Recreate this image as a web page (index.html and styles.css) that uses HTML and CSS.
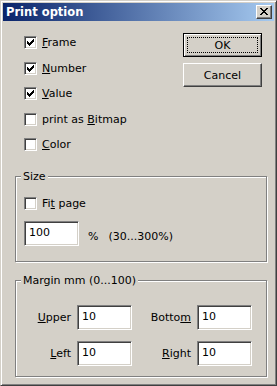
FILE: index.html
```html
<!DOCTYPE html>
<html lang="en">
<head>
  <meta charset="UTF-8">
  <title>Print option</title>
  <link rel="stylesheet" href="styles.css">
</head>
<body>
  <div class="window">
    <div class="titlebar">
      <span class="title">Print option</span>
      <span class="close">
        <svg width="8" height="7" viewBox="0 0 8 7"><path d="M0 0h2v1h-2z M6 0h2v1h-2z M1 1h2v1h-2z M5 1h2v1h-2z M2 2h4v1h-4z M3 3h2v1h-2z M2 4h4v1h-4z M1 5h2v1h-2z M5 5h2v1h-2z M0 6h2v1h-2z M6 6h2v1h-2z" fill="#000"/></svg>
      </span>
    </div>

    <div class="client">
      <div class="top">
        <div class="checks">
          <div class="check"><span class="box"><svg class="tick" viewBox="0 0 11 11"><path d="M2 4h1v3h-1z M3 5h1v3h-1z M4 6h1v3h-1z M5 5h1v3h-1z M6 4h1v3h-1z M7 3h1v3h-1z M8 2h1v3h-1z"/></svg></span><span><u>F</u>rame</span></div>
          <div class="check"><span class="box"><svg class="tick" viewBox="0 0 11 11"><path d="M2 4h1v3h-1z M3 5h1v3h-1z M4 6h1v3h-1z M5 5h1v3h-1z M6 4h1v3h-1z M7 3h1v3h-1z M8 2h1v3h-1z"/></svg></span><span><u>N</u>umber</span></div>
          <div class="check"><span class="box"><svg class="tick" viewBox="0 0 11 11"><path d="M2 4h1v3h-1z M3 5h1v3h-1z M4 6h1v3h-1z M5 5h1v3h-1z M6 4h1v3h-1z M7 3h1v3h-1z M8 2h1v3h-1z"/></svg></span><span><u>V</u>alue</span></div>
          <div class="check"><span class="box"></span><span>print as <u>B</u>itmap</span></div>
          <div class="check"><span class="box"></span><span><u>C</u>olor</span></div>
        </div>
        <div class="buttons">
          <button class="btn default"><span class="focus">OK</span></button>
          <button class="btn">Cancel</button>
        </div>
      </div>

      <div class="group size">
        <span class="legend">Size</span>
        <div class="check"><span class="box"></span><span>Fi<u>t</u> page</span></div>
        <div class="size-row">
          <span class="edit">100</span>
          <span class="unit">%</span>
          <span class="range">(30...300%)</span>
        </div>
      </div>

      <div class="group margin">
        <span class="legend">Margin mm (0...100)</span>
        <div class="margin-grid">
          <span class="lbl"><u>U</u>pper</span>
          <span class="edit">10</span>
          <span class="lbl">Botto<u>m</u></span>
          <span class="edit">10</span>
          <span class="lbl"><u>L</u>eft</span>
          <span class="edit">10</span>
          <span class="lbl"><u>R</u>ight</span>
          <span class="edit">10</span>
        </div>
      </div>
    </div>
  </div>
</body>
</html>
```

FILE: styles.css
```css
* {
  box-sizing: border-box;
  margin: 0;
  padding: 0;
}
html {
  background-color: #d4d0c8;
}
body {
  font-family: "DejaVu Sans", sans-serif;
  font-size: 11px;
  line-height: 13px;
  color: #000;
}
u {
  text-decoration-thickness: 1px;
  text-underline-offset: 1px;
}

/* window frame */
.window {
  width: 277px;
  height: 386px;
  background-color: #d4d0c8;
  border: 1px solid;
  border-color: #d4d0c8 #404040 #404040 #d4d0c8;
  box-shadow: inset 1px 1px #fff, inset -1px -1px #808080;
  padding: 2px;
  display: flex;
  flex-direction: column;
}
.titlebar {
  height: 18px;
  flex-shrink: 0;
  background: linear-gradient(to right, #0a246a, #a6caf0);
  display: flex;
  align-items: center;
  justify-content: space-between;
  padding: 0 2px 0 3px;
}
.title {
  color: #fff;
  font-weight: bold;
  font-size: 11.5px;
}
.close {
  width: 16px;
  height: 14px;
  background-color: #d4d0c8;
  border: 1px solid;
  border-color: #fff #404040 #404040 #fff;
  box-shadow: inset -1px -1px #808080;
  padding: 2px 0 0 3px;
}
.close svg {
  display: block;
}

/* dialog body */
.client {
  flex: 1;
  padding: 12px 6px 0 12px;
}
.top {
  display: flex;
  justify-content: space-between;
  align-items: flex-start;
}
.checks {
  display: flex;
  flex-direction: column;
  gap: 12.5px;
  margin: 3px 0 0 9px;
}
.check {
  display: flex;
  align-items: center;
  gap: 5px;
  height: 13px;
}
.box {
  flex-shrink: 0;
  width: 13px;
  height: 13px;
  background-color: #fff;
  border: 1px solid;
  border-color: #808080 #fff #fff #808080;
  box-shadow: inset 1px 1px #404040, inset -1px -1px #d4d0c8;
}
.tick {
  display: block;
  width: 11px;
  height: 11px;
  fill: #000;
}

.buttons {
  display: flex;
  flex-direction: column;
  gap: 6px;
  margin-right: 6px;
}
.btn {
  width: 79px;
  height: 24px;
  font: inherit;
  color: #000;
  background-color: #d4d0c8;
  border: 1px solid;
  border-color: #fff #404040 #404040 #fff;
  box-shadow: inset -1px -1px #808080;
}
.btn.default {
  border-color: #000;
  box-shadow: inset 1px 1px #fff, inset -1px -1px #808080;
  padding: 3px;
}
.focus {
  display: flex;
  height: 100%;
  align-items: center;
  justify-content: center;
  border: 1px dotted #000;
}

/* group boxes */
.group {
  position: relative;
  width: 252px;
  flex-shrink: 0;
  border: 1px solid #808080;
  box-shadow: inset 1px 1px #fff, 1px 1px #fff;
}
.legend {
  position: absolute;
  top: -7px;
  left: 5px;
  padding: 0 2px;
  background-color: #d4d0c8;
}
.size {
  height: 86px;
  margin-top: 25px;
  padding: 20px 0 0 8px;
}
.size-row {
  display: flex;
  align-items: flex-end;
  margin-top: 11px;
}
.edit {
  width: 55px;
  height: 25px;
  background-color: #fff;
  border: 1px solid;
  border-color: #808080 #fff #fff #808080;
  box-shadow: inset 1px 1px #404040, inset -1px -1px #d4d0c8;
  padding: 4px 0 0 4px;
}
.unit {
  margin: 0 0 3px 9px;
}
.range {
  margin: 0 0 3px 10px;
}
.margin {
  height: 97px;
  margin-top: 18px;
  padding-top: 24px;
}
.margin-grid {
  display: grid;
  grid-template-columns: 55px 55px 53px 55px;
  column-gap: 6px;
  row-gap: 11px;
  align-items: center;
}
.lbl {
  text-align: right;
}
```
